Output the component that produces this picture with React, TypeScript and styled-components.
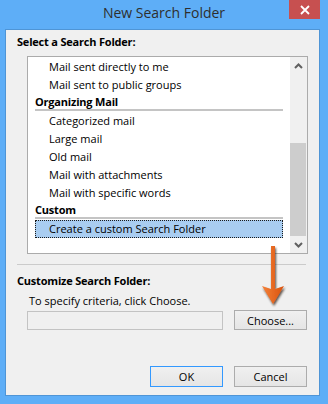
import React from "react";
import styled, { createGlobalStyle } from "styled-components";

const GlobalStyle = createGlobalStyle`
  html, body {
    margin: 0;
    padding: 0;
  }
  body {
    font-family: "Open Sans", "Noto Sans", sans-serif;
    color: #000;
  }
`;

const Window = styled.div`
  width: 328px;
  height: 404px;
  background: #5eaef7;
  display: flex;
  flex-direction: column;
  overflow: hidden;
`;

const TitleBar = styled.div`
  height: 29px;
  display: grid;
  grid-template-columns: 1fr auto 1fr;
  align-items: start;
`;

const Title = styled.div`
  grid-column: 2;
  font-size: 14px;
  line-height: 26px;
  color: #2e2e2e;
  white-space: nowrap;
`;

const CloseButton = styled.div`
  grid-column: 3;
  justify-self: end;
  margin-right: 8px;
  width: 31px;
  height: 19px;
  background: #c75050;
  display: flex;
  align-items: center;
  justify-content: center;
`;

const Panel = styled.div`
  position: relative;
  margin: 0 8px 0 5px;
  height: 367px;
  box-sizing: border-box;
  border: 1px solid #4f95d6;
  background: #f0f0f0;
  display: flex;
  flex-direction: column;
  padding-top: 4px;
  font-size: 11px;
`;

const GroupLabel = styled.div<{ $top?: number }>`
  margin-left: 11px;
  margin-top: ${(p) => p.$top ?? 0}px;
  font-weight: 700;
  line-height: 16px;
  letter-spacing: -0.2px;
`;

const ListBox = styled.div`
  margin: 6px 0 0 21px;
  width: 281px;
  height: 198px;
  box-sizing: border-box;
  border: 1px solid #ababab;
  background: #fff;
  display: flex;
`;

const ListContent = styled.div`
  flex: 1;
  padding-top: 1px;
  display: flex;
  flex-direction: column;
`;

const Item = styled.div<{ $selected?: boolean }>`
  margin: 0 7px;
  height: 18px;
  box-sizing: border-box;
  padding-left: 13px;
  line-height: 16px;
  border: 1px ${(p) => (p.$selected ? "dotted #1a1a1a" : "solid transparent")};
  background: ${(p) => (p.$selected ? "#a9cdf1" : "transparent")};
  white-space: nowrap;
`;

const Category = styled.div`
  margin: 0 7px 1px;
  height: 17px;
  box-sizing: border-box;
  line-height: 15px;
  font-weight: 700;
  border-bottom: 2px solid #c4c4c4;
  letter-spacing: -0.2px;
`;

const ScrollBar = styled.div`
  width: 17px;
  background: #f0f0f0;
  display: flex;
  flex-direction: column;
`;

const ScrollArrow = styled.div`
  height: 17px;
  display: flex;
  align-items: center;
  justify-content: center;
`;

const ScrollTrack = styled.div`
  flex: 1;
  display: flex;
  flex-direction: column;
  justify-content: flex-end;
`;

const Thumb = styled.div`
  height: 93px;
  margin-right: 1px;
  background: #cdcdcd;
`;

const Divider = styled.div`
  margin: 10px 13px 0 11px;
  height: 1px;
  background: #cbcbcb;
`;

const Hint = styled.div`
  margin: 4px 0 0 23px;
  line-height: 16px;
`;

const ChooseRow = styled.div`
  margin: 1px 0 0 21px;
  display: flex;
  align-items: flex-end;
  gap: 11px;
`;

const Field = styled.div`
  width: 196px;
  height: 19px;
  box-sizing: border-box;
  border: 1px solid #c3c3c3;
  background: #f0f0f0;
`;

const Button = styled.div<{ $default?: boolean }>`
  width: 73px;
  height: ${(p) => (p.$default ? 21 : 20)}px;
  box-sizing: border-box;
  border: 1px solid ${(p) => (p.$default ? "#3399ff" : "#acacac")};
  background: linear-gradient(#f0f0f0, #e5e5e5);
  display: flex;
  align-items: center;
  justify-content: center;
  font-size: 11px;
`;

const FooterButtons = styled.div`
  margin-top: 36px;
  padding-right: 12px;
  display: flex;
  justify-content: flex-end;
  gap: 11px;
  & > div {
    height: 21px;
  }
`;

const Annotation = styled.svg`
  position: absolute;
  left: 256px;
  top: 216px;
  overflow: visible;
`;

const Chevron = ({ up }: { up?: boolean }) => (
  <svg width="9" height="6" viewBox="0 0 9 6">
    <polyline
      points={up ? "1,5 4.5,1.5 8,5" : "1,1 4.5,4.5 8,1"}
      fill="none"
      stroke="#606060"
      strokeWidth="2"
    />
  </svg>
);

const upper = ["Mail sent directly to me", "Mail sent to public groups"];
const organizing = [
  "Categorized mail",
  "Large mail",
  "Old mail",
  "Mail with attachments",
  "Mail with specific words",
];

export default function App() {
  return (
    <>
      <GlobalStyle />
      <Window>
        <TitleBar>
          <Title>New Search Folder</Title>
          <CloseButton>
            <svg width="10" height="10" viewBox="0 0 10 10">
              <path d="M1 1 L9 9 M9 1 L1 9" stroke="#fff" strokeWidth="1.8" />
            </svg>
          </CloseButton>
        </TitleBar>
        <Panel>
          <GroupLabel>Select a Search Folder:</GroupLabel>
          <ListBox>
            <ListContent>
              {upper.map((t) => (
                <Item key={t}>{t}</Item>
              ))}
              <Category>Organizing Mail</Category>
              {organizing.map((t) => (
                <Item key={t}>{t}</Item>
              ))}
              <Category>Custom</Category>
              <Item $selected>Create a custom Search Folder</Item>
            </ListContent>
            <ScrollBar>
              <ScrollArrow>
                <Chevron up />
              </ScrollArrow>
              <ScrollTrack>
                <Thumb />
              </ScrollTrack>
              <ScrollArrow>
                <Chevron />
              </ScrollArrow>
            </ScrollBar>
          </ListBox>
          <Divider />
          <GroupLabel $top={8}>Customize Search Folder:</GroupLabel>
          <Hint>To specify criteria, click Choose.</Hint>
          <ChooseRow>
            <Field />
            <Button>Choose...</Button>
          </ChooseRow>
          <FooterButtons>
            <Button $default>OK</Button>
            <Button>Cancel</Button>
          </FooterButtons>
          <Annotation width="24" height="62" viewBox="0 0 24 62">
            <defs>
              <linearGradient id="arrowFill" x1="0" y1="0" x2="1" y2="0">
                <stop offset="0" stopColor="#f3813a" />
                <stop offset="1" stopColor="#d9520c" />
              </linearGradient>
              <filter id="arrowShadow" x="-50%" y="-20%" width="200%" height="150%">
                <feDropShadow dx="1" dy="2" stdDeviation="1.3" floodColor="#2a1a10" floodOpacity="0.75" />
              </filter>
            </defs>
            <polygon
              points="9,0 13,0 13,43 22,40 11,58 0,40 9,43"
              fill="url(#arrowFill)"
              filter="url(#arrowShadow)"
            />
          </Annotation>
        </Panel>
      </Window>
    </>
  );
}
